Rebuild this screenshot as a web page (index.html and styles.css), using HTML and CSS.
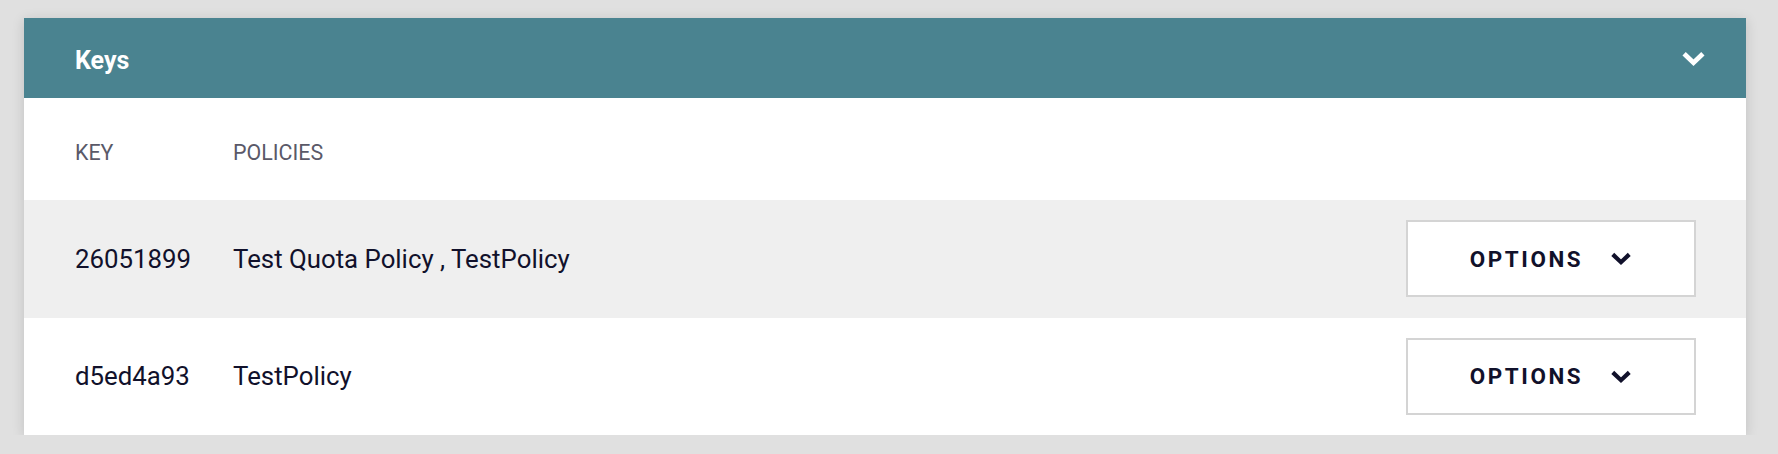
FILE: index.html
```html
<!DOCTYPE html>
<html lang="en">
<head>
<meta charset="utf-8">
<title>Keys</title>
<link rel="stylesheet" href="styles.css">
</head>
<body>
<section class="card">
  <header class="card-header">
    <h2 class="card-title">Keys</h2>
    <svg class="header-chevron" viewBox="0 0 24 16" aria-hidden="true"><polyline points="3,3.5 12,12 21,3.5" /></svg>
  </header>
  <div class="table">
    <div class="row thead">
      <div class="cell">KEY</div>
      <div class="cell">POLICIES</div>
      <div class="cell"></div>
    </div>
    <div class="row alt">
      <div class="cell">26051899</div>
      <div class="cell">Test Quota Policy , TestPolicy</div>
      <div class="cell"><button class="options">OPTIONS<svg class="btn-chevron" viewBox="0 0 24 16" aria-hidden="true"><polyline points="3,3.5 12,12 21,3.5" /></svg></button></div>
    </div>
    <div class="row last">
      <div class="cell">d5ed4a93</div>
      <div class="cell">TestPolicy</div>
      <div class="cell"><button class="options">OPTIONS<svg class="btn-chevron" viewBox="0 0 24 16" aria-hidden="true"><polyline points="3,3.5 12,12 21,3.5" /></svg></button></div>
    </div>
  </div>
</section>
</body>
</html>
```
FILE: styles.css
```css
html, body {
  margin: 0;
  padding: 0;
  background: #e0e0e0;
}
body {
  padding: 18px 32px 0 24px;
  font-family: Roboto, "Liberation Sans", sans-serif;
  color: #11112b;
}
.card {
  background: #ffffff;
  box-shadow: 0 2px 12px rgba(0, 0, 0, 0.14);
}
.card-header {
  height: 80px;
  box-sizing: border-box;
  background: #4a8390;
  display: flex;
  align-items: center;
  justify-content: space-between;
  padding: 4px 40px 0 51px;
}
.card-title {
  margin: 0;
  color: #ffffff;
  font-size: 25px;
  font-weight: 700;
}
.header-chevron {
  width: 25px;
  height: 17px;
  margin-top: -4px;
}
.header-chevron polyline,
.btn-chevron polyline {
  fill: none;
  stroke-width: 4.6;
  stroke-linecap: butt;
  stroke-linejoin: miter;
}
.header-chevron polyline { stroke: #ffffff; }
.btn-chevron polyline { stroke: #11112b; }
.row {
  display: grid;
  grid-template-columns: 158px 1fr auto;
  align-items: center;
  padding: 0 50px 0 51px;
  box-sizing: border-box;
  height: 117.5px;
  font-size: 25.8px;
}
.thead {
  height: 102px;
  padding-top: 6px;
  font-size: 21.4px;
  color: #5a5968;
}
.alt {
  background: #efefef;
}
.options {
  width: 290px;
  height: 77px;
  box-sizing: border-box;
  border: 2px solid #d4d4d4;
  background: #ffffff;
  font-family: Roboto, "Liberation Sans", sans-serif;
  font-size: 22.4px;
  font-weight: 700;
  letter-spacing: 2.6px;
  color: #11112b;
  display: flex;
  align-items: center;
  justify-content: center;
  gap: 27px;
  padding: 0;
  cursor: pointer;
}
.btn-chevron {
  width: 22px;
  height: 15px;
}
```
